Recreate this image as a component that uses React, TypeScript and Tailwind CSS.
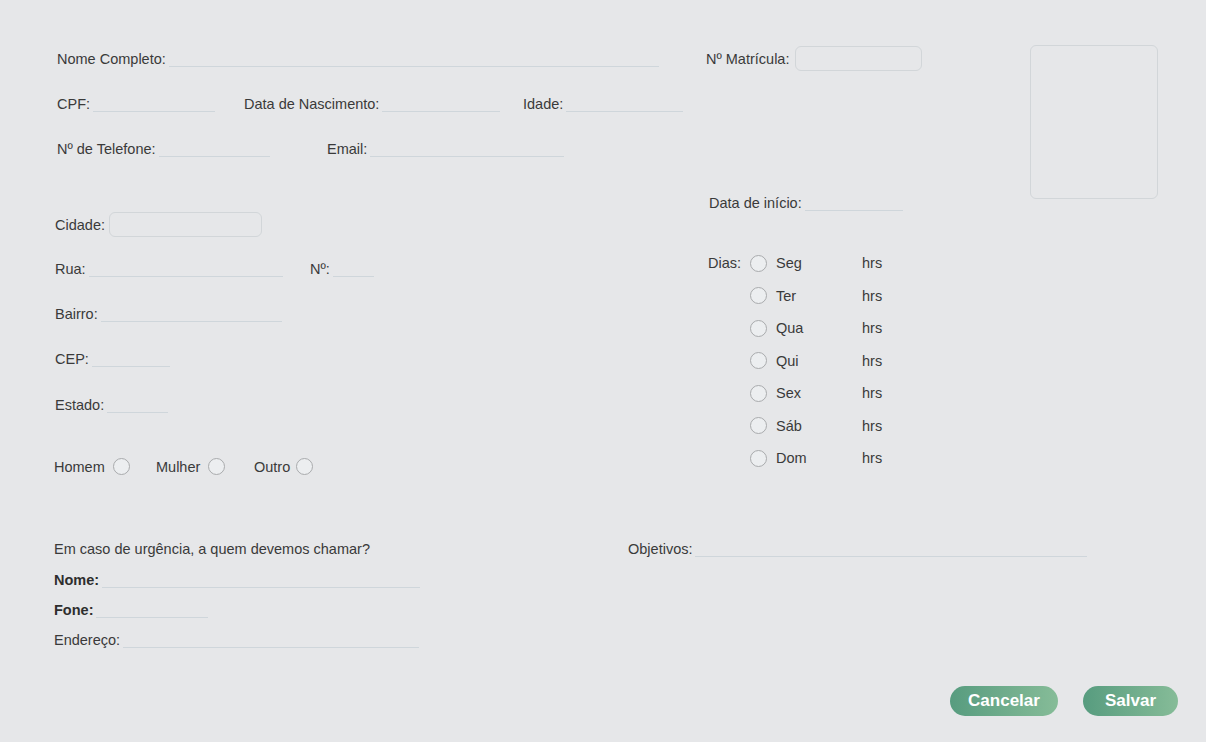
import React from "react";

const LINE = "border-b border-[#cfd6db]";

function Field({ label, w, bold = false, className = "" }: { label: string; w: number; bold?: boolean; className?: string }) {
  return (
    <div className={`flex items-end leading-[16px] self-start ${className}`} style={{ width: w }}>
      <span className={`whitespace-nowrap ${bold ? "font-bold text-[#2e2e2e]" : ""}`}>{label}</span>
      <span className={`flex-1 h-[16px] ml-[3px] ${LINE}`} />
    </div>
  );
}

function Radio({ className = "" }: { className?: string }) {
  return <span className={`inline-block w-[17px] h-[17px] rounded-full border border-[#a9abad] bg-[#eceef0] shrink-0 ${className}`} />;
}

const days = ["Seg", "Ter", "Qua", "Qui", "Sex", "Sáb", "Dom"];

export default function App() {
  return (
    <div
      className="w-[1206px] h-[742px] bg-[#e6e7e9] text-[#3a3a3a] text-[14.5px] overflow-hidden"
      style={{ fontFamily: '"Liberation Sans", Arial, sans-serif' }}
    >
      {/* top area */}
      <div className="flex h-[480px]">
        {/* left column */}
        <div className="w-[700px] pl-[54px] flex flex-col">
          <div className="mt-[51px] flex ml-[3px]">
            <Field label="Nome Completo:" w={602} />
          </div>
          <div className="mt-[29px] flex ml-[3px]">
            <Field label="CPF:" w={158} />
            <Field label="Data de Nascimento:" w={256} className="ml-[29px]" />
            <Field label="Idade:" w={160} className="ml-[23px]" />
          </div>
          <div className="mt-[29px] flex ml-[3px]">
            <Field label="Nº de Telefone:" w={213} />
            <Field label="Email:" w={237} className="ml-[57px]" />
          </div>

          <div className="mt-[55px] flex items-center h-[25px] ml-[1px]">
            <span className="leading-[16px]">Cidade:</span>
            <span className="ml-[4px] w-[153px] h-[25px] rounded-[6px] border border-[#d2d6d9]" />
          </div>
          <div className="mt-[24px] flex ml-[1px]">
            <Field label="Rua:" w={228} />
            <Field label="Nº:" w={64} className="ml-[27px]" />
          </div>
          <div className="mt-[29px] flex ml-[1px]">
            <Field label="Bairro:" w={227} />
          </div>
          <div className="mt-[29px] flex ml-[1px]">
            <Field label="CEP:" w={115} />
          </div>
          <div className="mt-[30px] flex ml-[1px]">
            <Field label="Estado:" w={113} />
          </div>
          <div className="mt-[45px] flex items-center h-[17px]">
            <span className="leading-[16px] w-[59px]">Homem</span>
            <Radio />
            <span className="leading-[16px] ml-[26px] w-[52px]">Mulher</span>
            <Radio />
            <span className="leading-[16px] ml-[29px] w-[42px]">Outro</span>
            <Radio />
          </div>
        </div>

        {/* right column */}
        <div className="w-[330px] flex flex-col">
          <div className="mt-[46px] ml-[6px] w-[216px] h-[25px] flex items-center">
            <span className="leading-[16px] whitespace-nowrap">Nº Matrícula:</span>
            <span className="ml-auto w-[127px] h-[25px] rounded-[6px] border border-[#d2d6d9]" />
          </div>
          <div className="mt-[124px] ml-[9px] flex">
            <Field label="Data de início:" w={194} />
          </div>
          <div className="mt-[36px] ml-[8px] flex flex-col">
            {days.map((d, i) => (
              <div key={d} className="h-[32.5px] flex items-center leading-[16px]">
                <span className="w-[42px]">{i === 0 ? "Dias:" : ""}</span>
                <Radio />
                <span className="ml-[9px] w-[86px]">{d}</span>
                <span>hrs</span>
              </div>
            ))}
          </div>
        </div>

        {/* photo */}
        <div className="mt-[45px] w-[128px] h-[154px] rounded-[6px] border border-[#d2d6d9] shrink-0" />
      </div>

      {/* bottom area */}
      <div className="flex items-start mt-[61px]">
        <div className="w-[628px] pl-[54px] flex flex-col">
          <div className="leading-[16px]">Em caso de urgência, a quem devemos chamar?</div>
          <div className="mt-[15px] flex">
            <Field label="Nome:" w={366} bold />
          </div>
          <div className="mt-[14px] flex">
            <Field label="Fone:" w={154} bold />
          </div>
          <div className="mt-[14px] flex">
            <Field label="Endereço:" w={365} />
          </div>
        </div>
        <div className="flex">
          <Field label="Objetivos:" w={459} />
        </div>
      </div>

      {/* buttons */}
      <div className="flex justify-end pr-[28px] mt-[38px] gap-[25px]">
        <button className="w-[108px] h-[30px] rounded-full bg-linear-to-r from-[#579c7f] to-[#86bc98] text-white font-bold text-[17px] leading-[30px]">
          Cancelar
        </button>
        <button className="w-[95px] h-[30px] rounded-full bg-linear-to-r from-[#579c7f] to-[#86bc98] text-white font-bold text-[17px] leading-[30px]">
          Salvar
        </button>
      </div>
    </div>
  );
}
